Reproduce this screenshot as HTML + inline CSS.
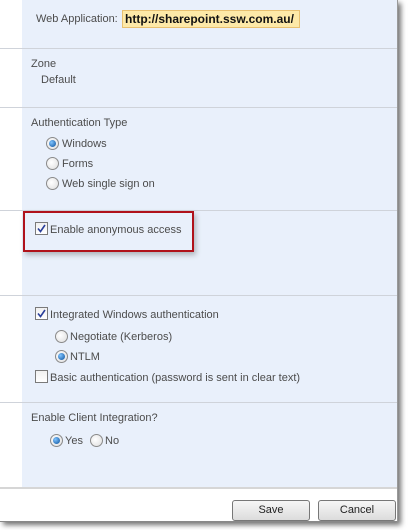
<!DOCTYPE html>
<html><head><style>
body{margin:0;width:408px;height:530px;background:#fff;position:relative;overflow:hidden;font-family:"Liberation Sans",sans-serif;font-size:11px;color:#4c4c4c}
.a{position:absolute;white-space:nowrap}
.frame{position:absolute;left:0;top:0;width:397px;height:521px;background:#fff;border-right:1px solid #999;border-bottom:1px solid #888;box-shadow:3px 3px 5px rgba(0,0,0,.55)}
.panel{position:absolute;left:22px;top:0;width:375px;height:487px;background:#e9f0fb}
.sep{position:absolute;left:0;width:397px;height:1px;background:#cfd3da}
.r{position:absolute;width:11px;height:11px;border-radius:50%;border:1px solid #8a8a8a;background:radial-gradient(circle at 40% 40%,#fff,#ddd)}
.r.on::after{content:"";position:absolute;left:2px;top:2px;width:7px;height:7px;border-radius:50%;background:radial-gradient(circle at 35% 35%,#7fc4ff,#0a4f9a)}
.c{position:absolute;width:11px;height:11px;border:1px solid #7a7a7a;background:linear-gradient(#f0f0f0,#fff)}
.c svg{position:absolute;left:1px;top:1px}
.btn{position:absolute;top:500px;width:76px;height:19px;border:1px solid #777;border-radius:3px;background:linear-gradient(#f6f6f6,#dcdcdc);text-align:center;line-height:19px;color:#222;font-size:11px}
</style></head><body>
<div class="frame"></div>
<div class="panel"></div>
<div class="sep" style="top:48px"></div>
<div class="sep" style="top:107px"></div>
<div class="sep" style="top:210px"></div>
<div class="sep" style="top:295px"></div>
<div class="sep" style="top:402px"></div>
<div class="sep" style="top:487px;height:2px;background:#d6d6d6"></div>

<div class="a" style="left:36px;top:13px">Web Application:</div>
<div class="a" style="left:122px;top:10px;width:174px;height:16px;background:#fde9a8;border:1px solid #e8c070;color:#111;font-weight:bold;font-size:12px;line-height:16px;padding-left:2px">http://sharepoint.ssw.com.au/</div>

<div class="a" style="left:31px;top:58px">Zone</div>
<div class="a" style="left:41px;top:74px">Default</div>

<div class="a" style="left:31px;top:117px">Authentication Type</div>
<div class="r on" style="left:46px;top:137px"></div><div class="a" style="left:62px;top:138px">Windows</div>
<div class="r" style="left:46px;top:157px"></div><div class="a" style="left:62px;top:158px">Forms</div>
<div class="r" style="left:46px;top:177px"></div><div class="a" style="left:62px;top:178px">Web single sign on</div>

<div class="a" style="left:23px;top:211px;width:167px;height:37px;border:2px solid #b0121b;box-shadow:2px 3px 5px rgba(0,0,0,.25)"></div>
<div class="c" style="left:35px;top:222px"><svg width="9" height="9"><path d="M1 4.5L3.5 7.5L8 1" stroke="#2a3f9a" stroke-width="1.6" fill="none"/></svg></div>
<div class="a" style="left:50px;top:224px">Enable anonymous access</div>

<div class="c" style="left:35px;top:307px"><svg width="9" height="9"><path d="M1 4.5L3.5 7.5L8 1" stroke="#2a3f9a" stroke-width="1.6" fill="none"/></svg></div>
<div class="a" style="left:50px;top:309px">Integrated Windows authentication</div>
<div class="r" style="left:55px;top:330px"></div><div class="a" style="left:70px;top:331px">Negotiate (Kerberos)</div>
<div class="r on" style="left:55px;top:350px"></div><div class="a" style="left:70px;top:351px">NTLM</div>
<div class="c" style="left:35px;top:370px"></div>
<div class="a" style="left:50px;top:372px">Basic authentication (password is sent in clear text)</div>

<div class="a" style="left:31px;top:412px">Enable Client Integration?</div>
<div class="r on" style="left:50px;top:434px"></div><div class="a" style="left:65px;top:435px">Yes</div>
<div class="r" style="left:90px;top:434px"></div><div class="a" style="left:105px;top:435px">No</div>

<div class="btn" style="left:232px">Save</div>
<div class="btn" style="left:318px">Cancel</div>
</body></html>
